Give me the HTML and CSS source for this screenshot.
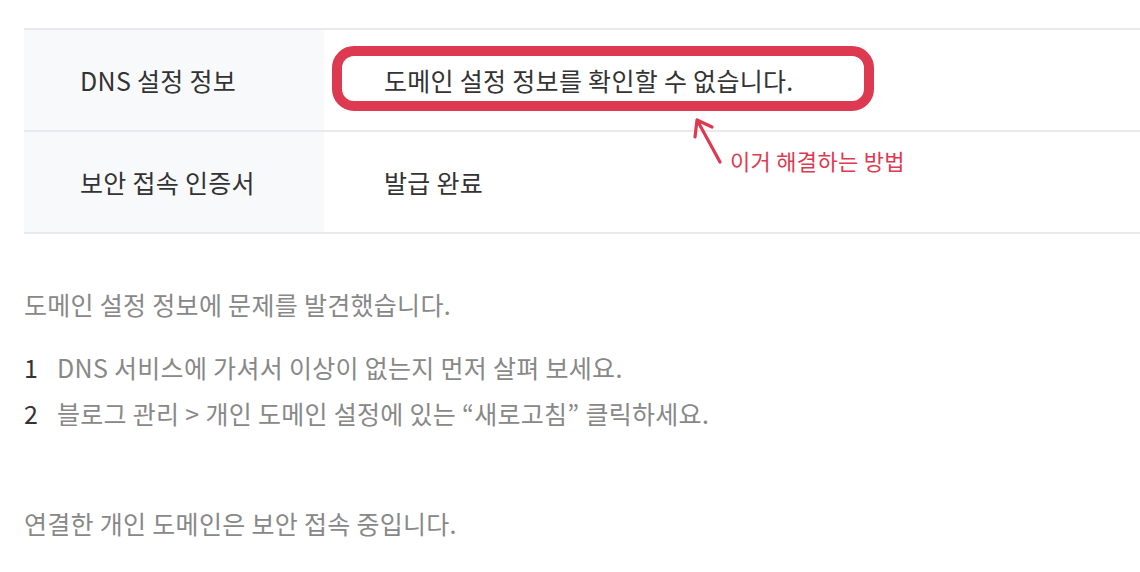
FILE: index.html
```html
<!doctype html>
<html>

<head>
    <meta charset="utf-8">
    <title>개인 도메인 설정</title>
    <link rel="stylesheet" href="styles.css">
</head>

<body>
    <div class="page">
        <table class="info">
            <tr>
                <th>DNS 설정 정보</th>
                <td class="value highlighted">
                    도메인 설정 정보를 확인할 수 없습니다.
                    <span class="mark"></span>
                    <svg class="arrow" width="40" height="60" viewBox="0 0 40 60">
                        <path d="M28 52 L5 10 M5 10 L3 27 M5 10 L20 17" fill="none" stroke="#dd3a51" stroke-width="3.2" stroke-linecap="round" stroke-linejoin="round"/>
                    </svg>
                    <span class="note">이거 해결하는 방법</span>
                </td>
            </tr>
            <tr>
                <th>보안 접속 인증서</th>
                <td class="value">발급 완료</td>
            </tr>
        </table>

        <p class="desc">도메인 설정 정보에 문제를 발견했습니다.</p>
        <ol class="steps">
            <li><span class="num">1</span>DNS 서비스에 가셔서 이상이 없는지 먼저 살펴 보세요.</li>
            <li><span class="num">2</span>블로그 관리 &gt; 개인 도메인 설정에 있는 “새로고침” 클릭하세요.</li>
        </ol>

        <p class="desc last">연결한 개인 도메인은 보안 접속 중입니다.</p>
    </div>
</body>

</html>
```

FILE: styles.css
```css
body {
    margin: 0;
    background-color: #fff;
    font-family: "Noto Sans CJK KR", "Noto Sans", sans-serif;
    color: #333;
    letter-spacing: 0.3px;
}
.page {
    padding: 28px 0 0 24px;
}
.info {
    width: 100%;
    border-collapse: collapse;
    border-top: 2px solid #e9e9ee;
}
.info tr {
    border-bottom: 2px solid #e9e9ee;
}
.info th {
    width: 300px;
    height: 102px;
    padding: 0 0 0 56px;
    box-sizing: border-box;
    background-color: #f8f9fb;
    text-align: left;
    font-weight: 400;
    font-size: 25px;
}
.info td {
    padding: 0 0 0 60px;
    font-size: 25px;
}
.highlighted {
    position: relative;
}
.mark {
    position: absolute;
    left: 8px;
    top: 16px;
    width: 542px;
    height: 65px;
    box-sizing: border-box;
    border: 10px solid #dd3a51;
    border-radius: 22px;
}
.arrow {
    position: absolute;
    left: 368px;
    top: 80px;
}
.note {
    position: absolute;
    left: 406px;
    top: 114px;
    font-size: 22px;
    color: #dd3a51;
    white-space: nowrap;
}
.desc {
    margin: 52px 0 0;
    font-size: 25px;
    line-height: 36px;
    color: #888;
}
.steps {
    list-style: none;
    margin: 22px 0 0;
    padding: 0;
    font-size: 25px;
    color: #888;
}
.steps li {
    line-height: 46px;
}
.num {
    display: inline-block;
    width: 33px;
    color: #333;
}
.desc.last {
    margin-top: 69px;
}
```
